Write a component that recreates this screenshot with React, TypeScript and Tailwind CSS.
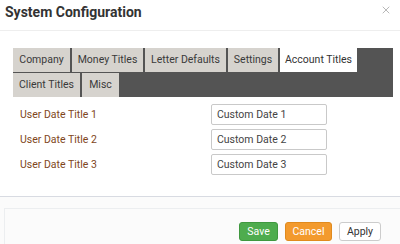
import { X } from 'lucide-react'

const tabsRow1 = [
  { label: 'Company', w: 'w-[57px]' },
  { label: 'Money Titles', w: 'w-[71px]' },
  { label: 'Letter Defaults', w: 'w-[81px]' },
  { label: 'Settings', w: 'w-[50px]' },
  { label: 'Account Titles', w: 'w-[77px]', active: true },
]

const tabsRow2 = [
  { label: 'Client Titles', w: 'w-[67px]' },
  { label: 'Misc', w: 'w-[37px]' },
]

const fields = ['Custom Date 1', 'Custom Date 2', 'Custom Date 3']

function Tab({ label, w, active }: { label: string; w: string; active?: boolean }) {
  return (
    <div
      className={`${w} h-[24px] flex items-center justify-center text-[10.5px] ${
        active ? 'bg-white text-[#333]' : 'bg-[#d6d3ce] text-[#3a3a3a]'
      }`}
    >
      {label}
    </div>
  )
}

export default function App() {
  return (
    <div className="w-[400px] h-[244px] bg-white flex flex-col font-['Roboto',Arial,sans-serif] overflow-hidden">
      {/* header */}
      <div className="h-[31px] flex items-start justify-between pl-[5px] pr-[8px] pt-[2px] border-b border-[#eeeeee]">
        <h1 className="text-[14px] font-bold text-[#333]">System Configuration</h1>
        <X className="w-[12px] h-[12px] mt-[2px] text-[#b8b8b8]" strokeWidth={2} />
      </div>

      {/* body */}
      <div className="flex-1 pt-[17px] pl-[13px] pr-[7px]">
        <div className="bg-[#545454] h-[49px] flex flex-col gap-[1px]">
          <div className="flex gap-[2px]">
            {tabsRow1.map((t) => (
              <Tab key={t.label} {...t} />
            ))}
          </div>
          <div className="flex gap-[2px]">
            {tabsRow2.map((t) => (
              <Tab key={t.label} {...t} />
            ))}
          </div>
        </div>

        <div className="flex flex-col gap-[4px] mt-[7px]">
          {['User Date Title 1', 'User Date Title 2', 'User Date Title 3'].map((l, i) => (
            <div key={l} className="flex items-center h-[21px]">
              <span className="w-[198px] pl-[7px] text-[10.5px] text-[#80461b]">{l}</span>
              <div className="w-[116px] h-[21px] border border-[#c9c9c9] rounded-[2px] flex items-center px-[5px] text-[10.5px] text-[#444]">
                {fields[i]}
              </div>
            </div>
          ))}
        </div>
      </div>

      {/* footer */}
      <div className="h-[48px] border-t border-[#d8dbe2] bg-[#fbfbfb] pt-[11px] pl-[4px]">
        <div className="h-full border-l border-t border-[#eceef0] flex items-start justify-end gap-[7px] pr-[19px] pt-[13px]">
          <button className="w-[39px] h-[19px] rounded-[3px] bg-[#4eac4e] border border-[#3f983f] text-white text-[10.5px]">
            Save
          </button>
          <button className="w-[47px] h-[19px] rounded-[3px] bg-[#f39a2d] border border-[#e08a1e] text-white text-[10.5px]">
            Cancel
          </button>
          <button className="w-[42px] h-[19px] rounded-[3px] bg-white border border-[#cccccc] text-[#333] text-[10.5px]">
            Apply
          </button>
        </div>
      </div>
    </div>
  )
}
